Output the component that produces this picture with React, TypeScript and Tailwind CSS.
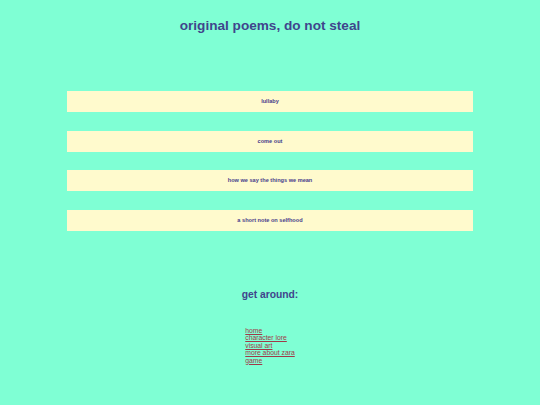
const poems = ['lullaby', 'come out', 'how we say the things we mean', 'a short note on selfhood']

const links = ['home', 'character lore', 'visual art', 'more about zara', 'game']

export default function App() {
  return (
    <div className="min-h-[405px] bg-[#7fffd4] font-['Liberation_Sans',Arial,sans-serif]">
      <h1 className="pt-[17px] text-center text-[13.6px] font-bold leading-[18px] text-[#3f458c]">
        original poems, do not steal
      </h1>

      <div className="mx-[67px] mt-[56px] flex flex-col gap-[18.5px]">
        {poems.map((p) => (
          <div
            key={p}
            className="flex h-[21px] items-center justify-center bg-[#fffacd] text-[5.6px] font-bold text-[#483d8b]"
          >
            {p}
          </div>
        ))}
      </div>

      <h2 className="mt-[57px] text-center text-[10.3px] font-bold leading-[14px] text-[#3f458c]">
        get around:
      </h2>

      <div className="mt-[25px] flex justify-center">
        <ul className="text-[6.8px] leading-[7.5px]">
          {links.map((l) => (
            <li key={l}>
              <a href="#" className="text-[#a03a48] underline">
                {l}
              </a>
            </li>
          ))}
        </ul>
      </div>
    </div>
  )
}
